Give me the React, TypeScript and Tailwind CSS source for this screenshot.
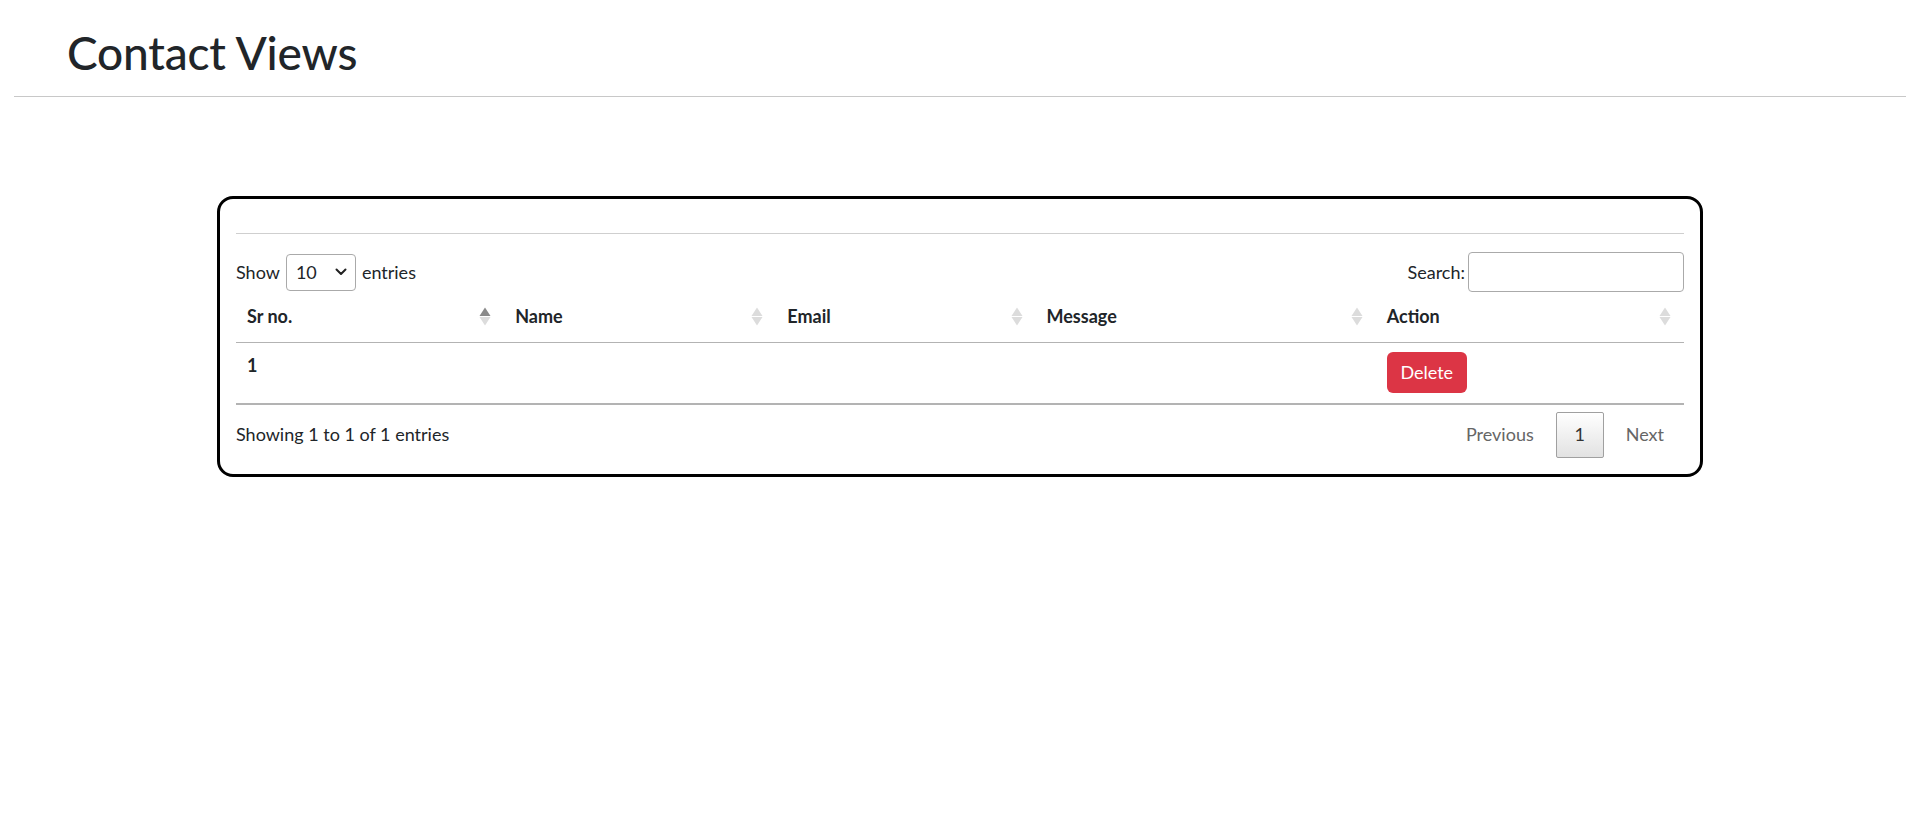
import React from "react";

function SortIcon({ active }: { active?: boolean }) {
  return (
    <svg width="12" height="19" viewBox="0 0 12 19" className="shrink-0">
      <polygon points="6,0.5 11.5,9 0.5,9" fill={active ? "#8a8a8a" : "#dcdcdc"} />
      <polygon points="0.5,10 11.5,10 6,18.5" fill="#dcdcdc" />
    </svg>
  );
}

const columns = [
  { label: "Sr no.", w: "w-[268px]" },
  { label: "Name", w: "w-[272px]" },
  { label: "Email", w: "w-[259px]" },
  { label: "Message", w: "w-[340px]" },
  { label: "Action", w: "w-[308px]" },
];

export default function App() {
  return (
    <div className="min-h-screen bg-white font-['Lato',sans-serif] text-[#212529]">
      <header className="px-[14px] pt-[25px]">
        <h1 className="ml-[53px] text-[46px] font-medium leading-[56px] tracking-[-0.2px]">Contact Views</h1>
        <div className="mt-[15px] h-px bg-[#c8c8c8]" />
      </header>

      <main className="pt-[99px]">
        <section className="mx-auto w-[1486px] rounded-[16px] border-[3px] border-black px-[16px] pb-[16px] pt-[34px]">
          <div className="h-px bg-[#cfcfcf]" />

          <div className="mt-[18px] flex items-center justify-between text-[18px]">
            <label className="flex items-center gap-[6px]">
              <span>Show</span>
              <div className="flex h-[37px] w-[70px] items-center justify-between rounded-[4px] border border-[#aaaaaa] pl-[9px] pr-[8px]">
                <span>10</span>
                <svg width="12" height="8" viewBox="0 0 12 8">
                  <path d="M1.5 1.5 L6 6 L10.5 1.5" fill="none" stroke="#222" strokeWidth="2" strokeLinecap="round" strokeLinejoin="round" />
                </svg>
              </div>
              <span>entries</span>
            </label>
            <label className="flex items-center">
              <span>Search:</span>
              <input type="text" className="ml-[3px] h-[40px] w-[216px] rounded-[4px] border border-[#aaaaaa] px-2 outline-none" />
            </label>
          </div>

          <table className="w-full table-fixed border-collapse text-[18px]">
            <colgroup>
              {columns.map((c) => (
                <col key={c.label} className={c.w} />
              ))}
            </colgroup>
            <thead>
              <tr className="border-b border-[#b3b3b3]">
                {columns.map((c, i) => (
                  <th key={c.label} className="h-[50px] pl-[11px] pr-[13px] text-left font-bold">
                    <div className="flex items-center justify-between">
                      <span>{c.label}</span>
                      <SortIcon active={i === 0} />
                    </div>
                  </th>
                ))}
              </tr>
            </thead>
            <tbody>
              <tr className="border-b-2 border-[#b3b3b3]">
                <td className="px-[11px] pb-[10px] pt-[9px] align-top font-bold leading-[26px]">1</td>
                <td className="px-[11px] pb-[10px] pt-[9px] align-top"></td>
                <td className="px-[11px] pb-[10px] pt-[9px] align-top"></td>
                <td className="px-[11px] pb-[10px] pt-[9px] align-top"></td>
                <td className="px-[11px] pb-[10px] pt-[9px] align-top">
                  <button className="h-[41px] w-[80px] rounded-[6px] bg-[#dc3545] text-[18px] text-white">Delete</button>
                </td>
              </tr>
            </tbody>
          </table>

          <div className="mt-[7px] flex items-center justify-between text-[18px]">
            <div>Showing 1 to 1 of 1 entries</div>
            <div className="flex items-center">
              <span className="flex h-[46px] items-center px-[20px] text-[#666666]">Previous</span>
              <span className="ml-[2px] flex h-[46px] w-[48px] items-center justify-center rounded-[2px] border border-[#a0a0a0] bg-gradient-to-b from-white to-[#e2e2e2] text-[#333333]">
                1
              </span>
              <span className="ml-[2px] flex h-[46px] items-center px-[20px] text-[#666666]">Next</span>
            </div>
          </div>
        </section>
      </main>
    </div>
  );
}
